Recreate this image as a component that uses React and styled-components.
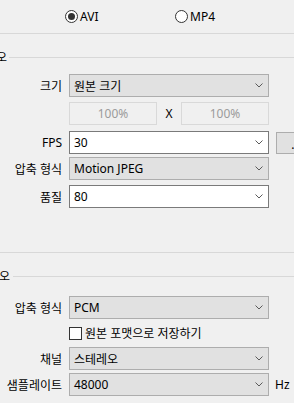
import React from "react";
import styled, { createGlobalStyle } from "styled-components";

const Global = createGlobalStyle`
  html, body { margin: 0; padding: 0; background: #f0f0f0; }
  body {
    font-family: "Noto Sans", "Noto Sans CJK KR", sans-serif;
    font-size: 12px;
    color: #000;
  }
`;

const Page = styled.div`
  width: 294px;
  height: 403px;
  overflow: hidden;
  background: #f0f0f0;
  display: flex;
  flex-direction: column;
`;

const RadioBar = styled.div`
  height: 33px;
  display: grid;
  grid-template-columns: 110px auto;
  align-items: center;
  padding-left: 65px;
`;

const RadioItem = styled.label`
  display: flex;
  align-items: center;
  gap: 2px;
  line-height: 14px;
`;

const RadioCircle = styled.span`
  width: 11px;
  height: 11px;
  border: 1px solid #333;
  border-radius: 50%;
  background: #fff;
  display: flex;
  align-items: center;
  justify-content: center;
  &::after {
    content: "";
    display: ${(p) => (p.$checked ? "block" : "none")};
    width: 7px;
    height: 7px;
    border-radius: 50%;
    background: #333;
  }
`;

const Divider = styled.div`
  height: 1px;
  background: #d8d8d8;
  flex-shrink: 0;
`;

const GroupHeader = styled.div`
  margin-top: 16px;
  height: 14px;
  display: flex;
  align-items: center;
  overflow: hidden;
`;

const GroupTitle = styled.span`
  margin-left: ${(p) => p.$offset}px;
  line-height: 14px;
  white-space: nowrap;
  font-family: "Noto Sans CJK KR", sans-serif;
`;

const GroupRule = styled.span`
  flex: 1;
  height: 1px;
  background: #d8d8d8;
  margin-left: ${(p) => p.$gap}px;
  margin-top: 1px;
`;

const Row = styled.div`
  display: flex;
  align-items: center;
  margin-top: ${(p) => p.$mt}px;
  height: ${(p) => p.$h || 23}px;
`;

const Label = styled.span`
  width: 62px;
  margin-right: 7px;
  text-align: right;
  white-space: nowrap;
  flex-shrink: 0;
`;

const Combo = styled.div`
  box-sizing: border-box;
  width: 200px;
  height: 23px;
  flex-shrink: 0;
  display: flex;
  align-items: center;
  padding: 0 5px 0 4px;
  background: ${(p) => (p.$white ? "#ffffff" : "#e1e1e1")};
  border: 1px solid ${(p) => (p.$white ? "#7a7a7a" : "#adadad")};
`;

const ComboText = styled.span`
  flex: 1;
  white-space: nowrap;
`;

const Chevron = () => (
  <svg width="8" height="5" viewBox="0 0 8 5" style={{ display: "block" }}>
    <polyline points="0.5,0.5 4,4 7.5,0.5" fill="none" stroke="#5a5a5a" strokeWidth="1" />
  </svg>
);

const SizeBox = styled.div`
  box-sizing: border-box;
  width: 88px;
  height: 23px;
  border: 1px solid #d9d9d9;
  background: #f0f0f0;
  color: #9b9b9b;
  display: flex;
  align-items: center;
  justify-content: center;
`;

const Times = styled.span`
  width: 24px;
  text-align: center;
`;

const Spacer = styled.span`
  width: 69px;
  flex-shrink: 0;
`;

const SideButton = styled.div`
  box-sizing: border-box;
  margin-left: 7px;
  width: 40px;
  height: 22px;
  margin-top: 1px;
  flex-shrink: 0;
  background: #e1e1e1;
  border: 1px solid #adadad;
  display: flex;
  align-items: center;
  justify-content: center;
  padding-top: 2px;
`;

const Unit = styled.span`
  margin-left: 6px;
  white-space: nowrap;
`;

const CheckRow = styled.label`
  display: flex;
  align-items: center;
  margin-top: ${(p) => p.$mt}px;
  margin-left: 69px;
  height: 14px;
  gap: 3px;
`;

const CheckBox = styled.span`
  box-sizing: border-box;
  width: 13px;
  height: 13px;
  border: 1px solid #333;
  background: #fff;
  flex-shrink: 0;
`;

const Radio = ({ checked, children }) => (
  <RadioItem>
    <RadioCircle $checked={checked} />
    <span>{children}</span>
  </RadioItem>
);

const Select = ({ white, children }) => (
  <Combo $white={white}>
    <ComboText>{children}</ComboText>
    <Chevron />
  </Combo>
);

export default function App() {
  return (
    <>
      <Global />
      <Page>
        <RadioBar>
          <Radio checked>AVI</Radio>
          <Radio>MP4</Radio>
        </RadioBar>
        <Divider />

        <GroupHeader>
          <GroupTitle $offset={-26}>비디오</GroupTitle>
          <GroupRule $gap={2} />
        </GroupHeader>
        <Row $mt={10}>
          <Label>크기</Label>
          <Select>원본 크기</Select>
        </Row>
        <Row $mt={5}>
          <Spacer />
          <SizeBox>100%</SizeBox>
          <Times>X</Times>
          <SizeBox>100%</SizeBox>
        </Row>
        <Row $mt={6}>
          <Label>FPS</Label>
          <Select white>30</Select>
          <SideButton>...</SideButton>
        </Row>
        <Row $mt={3}>
          <Label>압축 형식</Label>
          <Select>Motion JPEG</Select>
        </Row>
        <Row $mt={5}>
          <Label>품질</Label>
          <Select white>80</Select>
        </Row>
        <Row $mt={44} $h={1}>
          <Divider style={{ flex: 1 }} />
        </Row>

        <GroupHeader>
          <GroupTitle $offset={-23}>오디오</GroupTitle>
          <GroupRule $gap={3} />
        </GroupHeader>
        <Row $mt={13}>
          <Label>압축 형식</Label>
          <Select>PCM</Select>
        </Row>
        <CheckRow $mt={7}>
          <CheckBox />
          <span>원본 포맷으로 저장하기</span>
        </CheckRow>
        <Row $mt={7}>
          <Label>채널</Label>
          <Select>스테레오</Select>
        </Row>
        <Row $mt={3}>
          <Label>샘플레이트</Label>
          <Select>48000</Select>
          <Unit>Hz</Unit>
        </Row>
      </Page>
    </>
  );
}
